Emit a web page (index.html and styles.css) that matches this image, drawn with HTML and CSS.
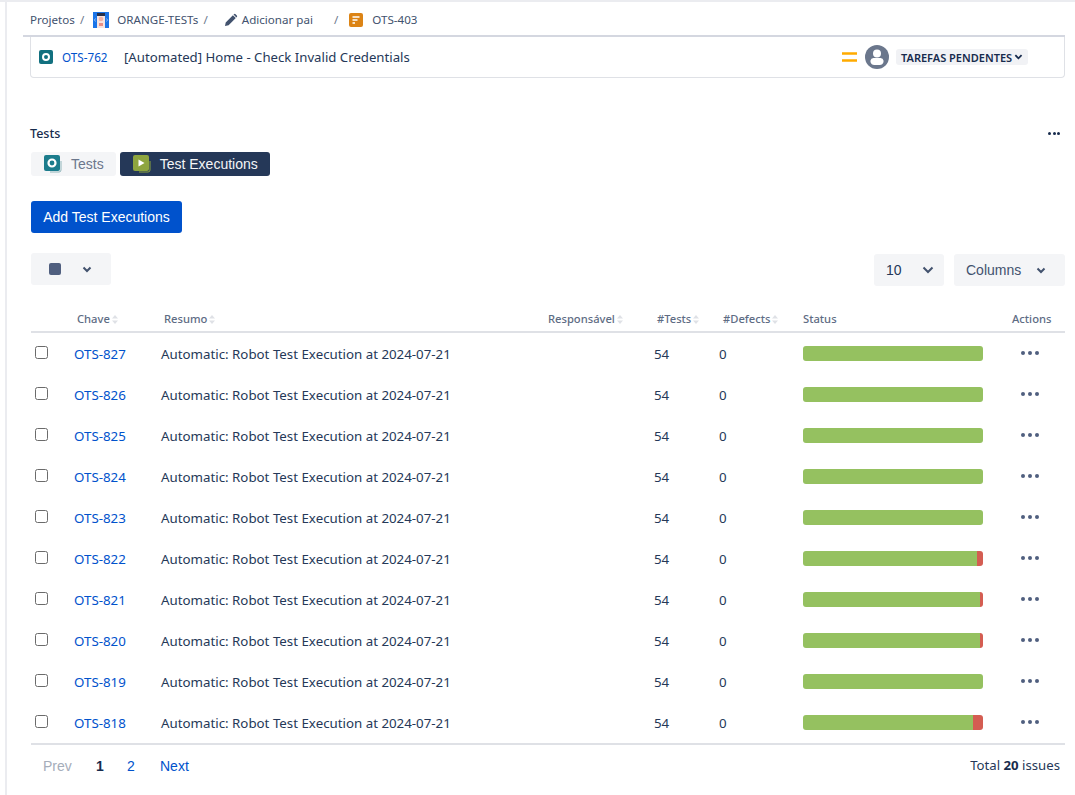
FILE: index.html
```html
<!DOCTYPE html>
<html lang="pt">
<head>
<meta charset="utf-8">
<title>OTS-403</title>
<link rel="stylesheet" href="styles.css">
</head>
<body>
<div class="page">
  <nav class="crumbs">
    <span class="crumb">Projetos</span><span class="sep">/</span>
    <svg class="proj-ico" width="16" height="16" viewBox="0 0 16 16"><rect width="16" height="16" fill="#1a74e8"/><path d="M2.500 6.500L1.500 8l1 1.500M13.500 6.500L14.500 8l-1 1.500" fill="none" stroke="#a9cdf7" stroke-width=".8"/><rect x="4" y="1" width="8" height="15" fill="#f6e4e0"/><rect x="4" y="1" width="8" height="3" fill="#27304a"/><circle cx="8" cy="7" r="2.300" fill="#f2b3a6"/><rect x="6" y="11" width="4" height="3" fill="#e88f86"/></svg>
    <span class="crumb">ORANGE-TESTs</span><span class="sep">/</span>
    <svg class="pen-ico" width="14" height="14" viewBox="0 0 14 14"><path d="M1 13l.7-3.600L8.900 2.200l2.900 2.900-7.200 7.200zM9.900 1.200a1.200 1.200 0 0 1 1.700 0l1.200 1.200a1.200 1.200 0 0 1 0 1.700l-.4.400-2.900-2.900z" fill="#42526e"/></svg>
    <span class="crumb">Adicionar pai</span><span class="sep sep-wide">/</span>
    <svg class="story-ico" width="14" height="14" viewBox="0 0 14 14"><rect width="14" height="14" rx="2" fill="#dc8415"/><path d="M3.500 4h7M3.500 7h5M3.500 10h2.500" stroke="#fff" stroke-width="1.400"/></svg>
    <span class="crumb">OTS-403</span>
  </nav>

  <div class="card-rule"></div>
  <section class="issue-card">
    <svg class="test-ico" width="14" height="14" viewBox="0 0 14 14"><rect width="14" height="14" rx="2" fill="#12707f"/><circle cx="7" cy="7" r="3" fill="none" stroke="#fff" stroke-width="2"/></svg>
    <a class="issue-key">OTS-762</a>
    <span class="issue-title">[Automated] Home - Check Invalid Credentials</span>
    <svg class="prio" width="16" height="12" viewBox="0 0 16 12"><path d="M0 2.500h15M0 9.500h15" stroke="#ffab00" stroke-width="2.400"/></svg>
    <svg class="avatar" width="24" height="24" viewBox="0 0 24 24"><circle cx="12" cy="12" r="12" fill="#6b778c"/><circle cx="12" cy="8.500" r="4" fill="#fff"/><path d="M5.500 15.500a3 3 0 0 1 3-2.500h7a3 3 0 0 1 3 2.500v1.500a4 4 0 0 1-4 3h-5a4 4 0 0 1-4-3z" fill="#fff"/></svg>
    <span class="status-pill">TAREFAS PENDENTES<svg width="10" height="8" viewBox="0 0 10 8"><path d="M1.500 2l3.500 3.500L8.500 2" fill="none" stroke="#172b4d" stroke-width="2"/></svg></span>
  </section>

  <div class="panel-head">
    <h2>Tests</h2>
    <span class="panel-more"><i></i><i></i><i></i></span>
  </div>

  <div class="tabs">
    <button class="tab">
      <svg width="18" height="18" viewBox="0 0 18 18"><path d="M17 6v9a2 2 0 0 1-2 2H6" fill="none" stroke="#8fb5ba" stroke-width="1"/><rect width="16" height="16" rx="2" fill="#1c7c8c"/><circle cx="8" cy="8" r="3.500" fill="none" stroke="#fff" stroke-width="2.200"/></svg>
      Tests
    </button>
    <button class="tab tab-active">
      <svg width="18" height="18" viewBox="0 0 18 18"><path d="M17 6v9a2 2 0 0 1-2 2H6" fill="none" stroke="#8ea53f" stroke-width="1"/><rect width="16" height="16" rx="2" fill="#8ea53f"/><path d="M5.500 4.500v7L11.500 8z" fill="#fff"/></svg>
      Test Executions
    </button>
  </div>

  <button class="primary">Add Test Executions</button>

  <div class="toolbar">
    <button class="tool tool-check"><span class="square"></span>
      <svg class="chev" width="10" height="7" viewBox="0 0 10 7"><path d="M1.500 1.500L5 5l3.500-3.500" fill="none" stroke="#42526e" stroke-width="2"/></svg></button>
    <div class="toolbar-right">
      <button class="tool tool-size"><span>10</span>
        <svg width="12" height="8" viewBox="0 0 12 8"><path d="M1.500 1.500L6 6l4.500-4.500" fill="none" stroke="#42526e" stroke-width="2"/></svg></button>
      <button class="tool tool-cols"><span>Columns</span>
        <svg width="10" height="7" viewBox="0 0 10 7"><path d="M1.500 1.500L5 5l3.500-3.500" fill="none" stroke="#42526e" stroke-width="2"/></svg></button>
    </div>
  </div>

  <div class="grid-table">
    <div class="row head">
      <span></span>
      <span class="h-key">Chave<svg class="sort" width="6" height="9" viewBox="0 0 6 9"><path d="M3 0l3 3.500H0zM3 9L0 5.500h6z" fill="#dfe1e6"/></svg></span>
      <span class="h-sum">Resumo<svg class="sort" width="6" height="9" viewBox="0 0 6 9"><path d="M3 0l3 3.500H0zM3 9L0 5.500h6z" fill="#dfe1e6"/></svg></span>
      <span>Responsável<svg class="sort" width="6" height="9" viewBox="0 0 6 9"><path d="M3 0l3 3.500H0zM3 9L0 5.500h6z" fill="#dfe1e6"/></svg></span>
      <span class="h-tests">#Tests<svg class="sort" width="6" height="9" viewBox="0 0 6 9"><path d="M3 0l3 3.500H0zM3 9L0 5.500h6z" fill="#dfe1e6"/></svg></span>
      <span class="h-def">#Defects<svg class="sort" width="6" height="9" viewBox="0 0 6 9"><path d="M3 0l3 3.500H0zM3 9L0 5.500h6z" fill="#dfe1e6"/></svg></span>
      <span>Status</span>
      <span>Actions</span>
    </div>
    <div class="row"><span class="check"></span><a class="key">OTS-827</a><span>Automatic: Robot Test Execution at 2024-07-21</span><span></span><span>54</span><span>0</span><span class="bar"><i class="pass"></i></span><span class="dots"><i></i><i></i><i></i></span></div>
    <div class="row"><span class="check"></span><a class="key">OTS-826</a><span>Automatic: Robot Test Execution at 2024-07-21</span><span></span><span>54</span><span>0</span><span class="bar"><i class="pass"></i></span><span class="dots"><i></i><i></i><i></i></span></div>
    <div class="row"><span class="check"></span><a class="key">OTS-825</a><span>Automatic: Robot Test Execution at 2024-07-21</span><span></span><span>54</span><span>0</span><span class="bar"><i class="pass"></i></span><span class="dots"><i></i><i></i><i></i></span></div>
    <div class="row"><span class="check"></span><a class="key">OTS-824</a><span>Automatic: Robot Test Execution at 2024-07-21</span><span></span><span>54</span><span>0</span><span class="bar"><i class="pass"></i></span><span class="dots"><i></i><i></i><i></i></span></div>
    <div class="row"><span class="check"></span><a class="key">OTS-823</a><span>Automatic: Robot Test Execution at 2024-07-21</span><span></span><span>54</span><span>0</span><span class="bar"><i class="pass"></i></span><span class="dots"><i></i><i></i><i></i></span></div>
    <div class="row"><span class="check"></span><a class="key">OTS-822</a><span>Automatic: Robot Test Execution at 2024-07-21</span><span></span><span>54</span><span>0</span><span class="bar"><i class="pass"></i><i class="fail" style="width:6px"></i></span><span class="dots"><i></i><i></i><i></i></span></div>
    <div class="row"><span class="check"></span><a class="key">OTS-821</a><span>Automatic: Robot Test Execution at 2024-07-21</span><span></span><span>54</span><span>0</span><span class="bar"><i class="pass"></i><i class="fail" style="width:3px"></i></span><span class="dots"><i></i><i></i><i></i></span></div>
    <div class="row"><span class="check"></span><a class="key">OTS-820</a><span>Automatic: Robot Test Execution at 2024-07-21</span><span></span><span>54</span><span>0</span><span class="bar"><i class="pass"></i><i class="fail" style="width:3px"></i></span><span class="dots"><i></i><i></i><i></i></span></div>
    <div class="row"><span class="check"></span><a class="key">OTS-819</a><span>Automatic: Robot Test Execution at 2024-07-21</span><span></span><span>54</span><span>0</span><span class="bar"><i class="pass"></i></span><span class="dots"><i></i><i></i><i></i></span></div>
    <div class="row"><span class="check"></span><a class="key">OTS-818</a><span>Automatic: Robot Test Execution at 2024-07-21</span><span></span><span>54</span><span>0</span><span class="bar"><i class="pass"></i><i class="fail" style="width:10px"></i></span><span class="dots"><i></i><i></i><i></i></span></div>
  </div>

  <footer class="pager">
    <div class="pages">
      <span class="prev">Prev</span>
      <span class="cur">1</span>
      <a class="num">2</a>
      <a>Next</a>
    </div>
    <span class="total">Total <b>20</b> issues</span>
  </footer>
</div>
</body>
</html>
```
FILE: styles.css
```css
* { box-sizing: border-box; }
html, body { margin: 0; padding: 0; background: #fff; }
body {
  height: 795px;
  overflow: hidden;
  font-family: "Noto Sans", "Open Sans", sans-serif;
  font-size: 13px;
  color: #172b4d;
  border-top: 2px solid #ebecf0;
}
.page {
  margin-left: 5px;
  height: 793px;
  border-left: 2px solid #ebecf0;
  padding-left: 24px;
  padding-right: 10px;
}
a { color: #0052cc; text-decoration: none; }
button { font: inherit; border: 0; cursor: pointer; }

.crumbs {
  height: 33px;
  display: flex;
  align-items: center;
  font-size: 11.600px;
  color: #42526e;
  padding-top: 2px;
  margin-left: -1px;
}
.sep { margin: 0 0 0 5px; color: #6b778c; }
.proj-ico { margin-left: 9px; margin-right: 8px; }
.pen-ico { margin-left: 16px; margin-right: 4px; }
.sep-wide { margin-left: 21px; }
.story-ico { margin-left: 11px; margin-right: 9px; }

.card-rule { height: 2px; background: #d4d7e0; margin-left: -8px; }
.issue-card {
  margin-left: -1px;
  height: 41px;
  display: flex;
  align-items: center;
  padding-left: 8px;
  border: 1px solid #dfe1e6;
  border-top: 0;
  border-radius: 0 0 4px 4px;
}
.test-ico { margin-right: 9px; }
.issue-key { font-size: 11.700px; width: 62px; }
.issue-title { font-size: 13.200px; flex: 1; color: #253858; }
.prio { margin-right: 7px; }
.avatar { margin-right: 7px; }
.status-pill {
  display: flex;
  align-items: center;
  gap: 2px;
  height: 16px;
  width: 132px;
  margin-right: 36px;
  padding: 0 5px;
  background: #f1f2f5;
  border-radius: 3px;
  font-size: 11px;
  font-weight: 600;
  color: #172b4d;
  white-space: nowrap;
}

.panel-head {
  margin-top: 45px;
  height: 20px;
  display: flex;
  align-items: center;
  justify-content: space-between;
  margin-left: -1px;
  padding-right: 5px;
}
.panel-head h2 { margin: 0; font-size: 12.500px; font-weight: 500; color: #172b4d; }
.panel-more { display: flex; gap: 1.500px; }
.panel-more i { width: 3px; height: 3px; border-radius: 50%; background: #172b4d; }

.tabs { margin-top: 9px; display: flex; gap: 4px; }
.tab {
  height: 24px;
  display: flex;
  align-items: center;
  gap: 9px;
  padding: 0 12px 0 13px;
  background: #f4f5f7;
  border-radius: 3px;
  font-family: "Liberation Sans", Arial, sans-serif;
  font-size: 14px;
  color: #6b778c;
}
.tab-active { background: #253858; color: #f4f5f7; }

.primary {
  display: block;
  margin-top: 25px;
  width: 151px;
  height: 32px;
  background: #0052cc;
  color: #fff;
  border-radius: 3px;
  font-family: "Liberation Sans", Arial, sans-serif;
  font-size: 14px;
}

.toolbar {
  margin-top: 20px;
  height: 32px;
  display: flex;
  justify-content: space-between;
}
.toolbar-right { display: flex; gap: 10px; margin-top: 1px; }
.tool {
  height: 32px;
  display: flex;
  align-items: center;
  justify-content: space-between;
  background: #f4f5f7;
  border-radius: 3px;
  font-family: "Liberation Sans", Arial, sans-serif;
  font-size: 14px;
  color: #42526e;
}
.tool-check { width: 80px; padding: 0 19px 0 18px; }
.square { width: 12px; height: 12px; border-radius: 2px; background: #505f7f; }
.tool-size { width: 70px; padding: 0 10px 0 12px; color: #253858; }
.tool-cols { width: 111px; padding: 0 19px 0 12px; }

.grid-table { margin-top: 21px; border-bottom: 2px solid #dfe1e6; }
.row {
  display: grid;
  grid-template-columns: 43px 87px 387px 106px 65px 84px 209px 53px;
  align-items: center;
  height: 41px;
  font-size: 13.300px;
  color: #253858;
  white-space: nowrap;
}
.head {
  height: 27px;
  font-size: 11.200px;
  font-weight: 500;
  color: #5e6c84;
  border-bottom: 2px solid #dfe1e6;
  padding-bottom: 1px;
}
.h-key, .h-sum { padding-left: 3px; }
.h-def { padding-left: 4px; }
.h-tests { padding-left: 3px; }
.sort { margin-left: 2px; vertical-align: -1px; }
.check {
  width: 13px;
  height: 13px;
  margin-left: 4px;
  margin-top: -2px;
  border: 1px solid #6b6b6b;
  border-radius: 2.500px;
  background: #fff;
}
.bar {
  display: flex;
  width: 180px;
  height: 15px;
  margin-top: -1px;
  border-radius: 3px;
  overflow: hidden;
}
.bar i { display: block; height: 100%; }
.pass { flex: 1; background: #95c160; }
.fail { background: #d45d52; }
.dots { display: flex; gap: 3px; margin-left: 9px; margin-top: -2px; }
.dots i { width: 4px; height: 4px; border-radius: 50%; background: #505f7f; }

.pager {
  height: 42px;
  display: flex;
  align-items: center;
  justify-content: space-between;
  padding-right: 5px;
}
.pages {
  display: flex;
  align-items: center;
  font-family: "Liberation Sans", Arial, sans-serif;
  font-size: 14px;
  padding-left: 12px;
}
.prev { color: #a5adba; width: 53px; }
.cur { color: #172b4d; width: 31px; font-weight: 700; }
.num { width: 33px; }
.total { font-size: 13.200px; color: #253858; padding-bottom: 2px; }
.total b { font-weight: 700; color: #172b4d; }
```
